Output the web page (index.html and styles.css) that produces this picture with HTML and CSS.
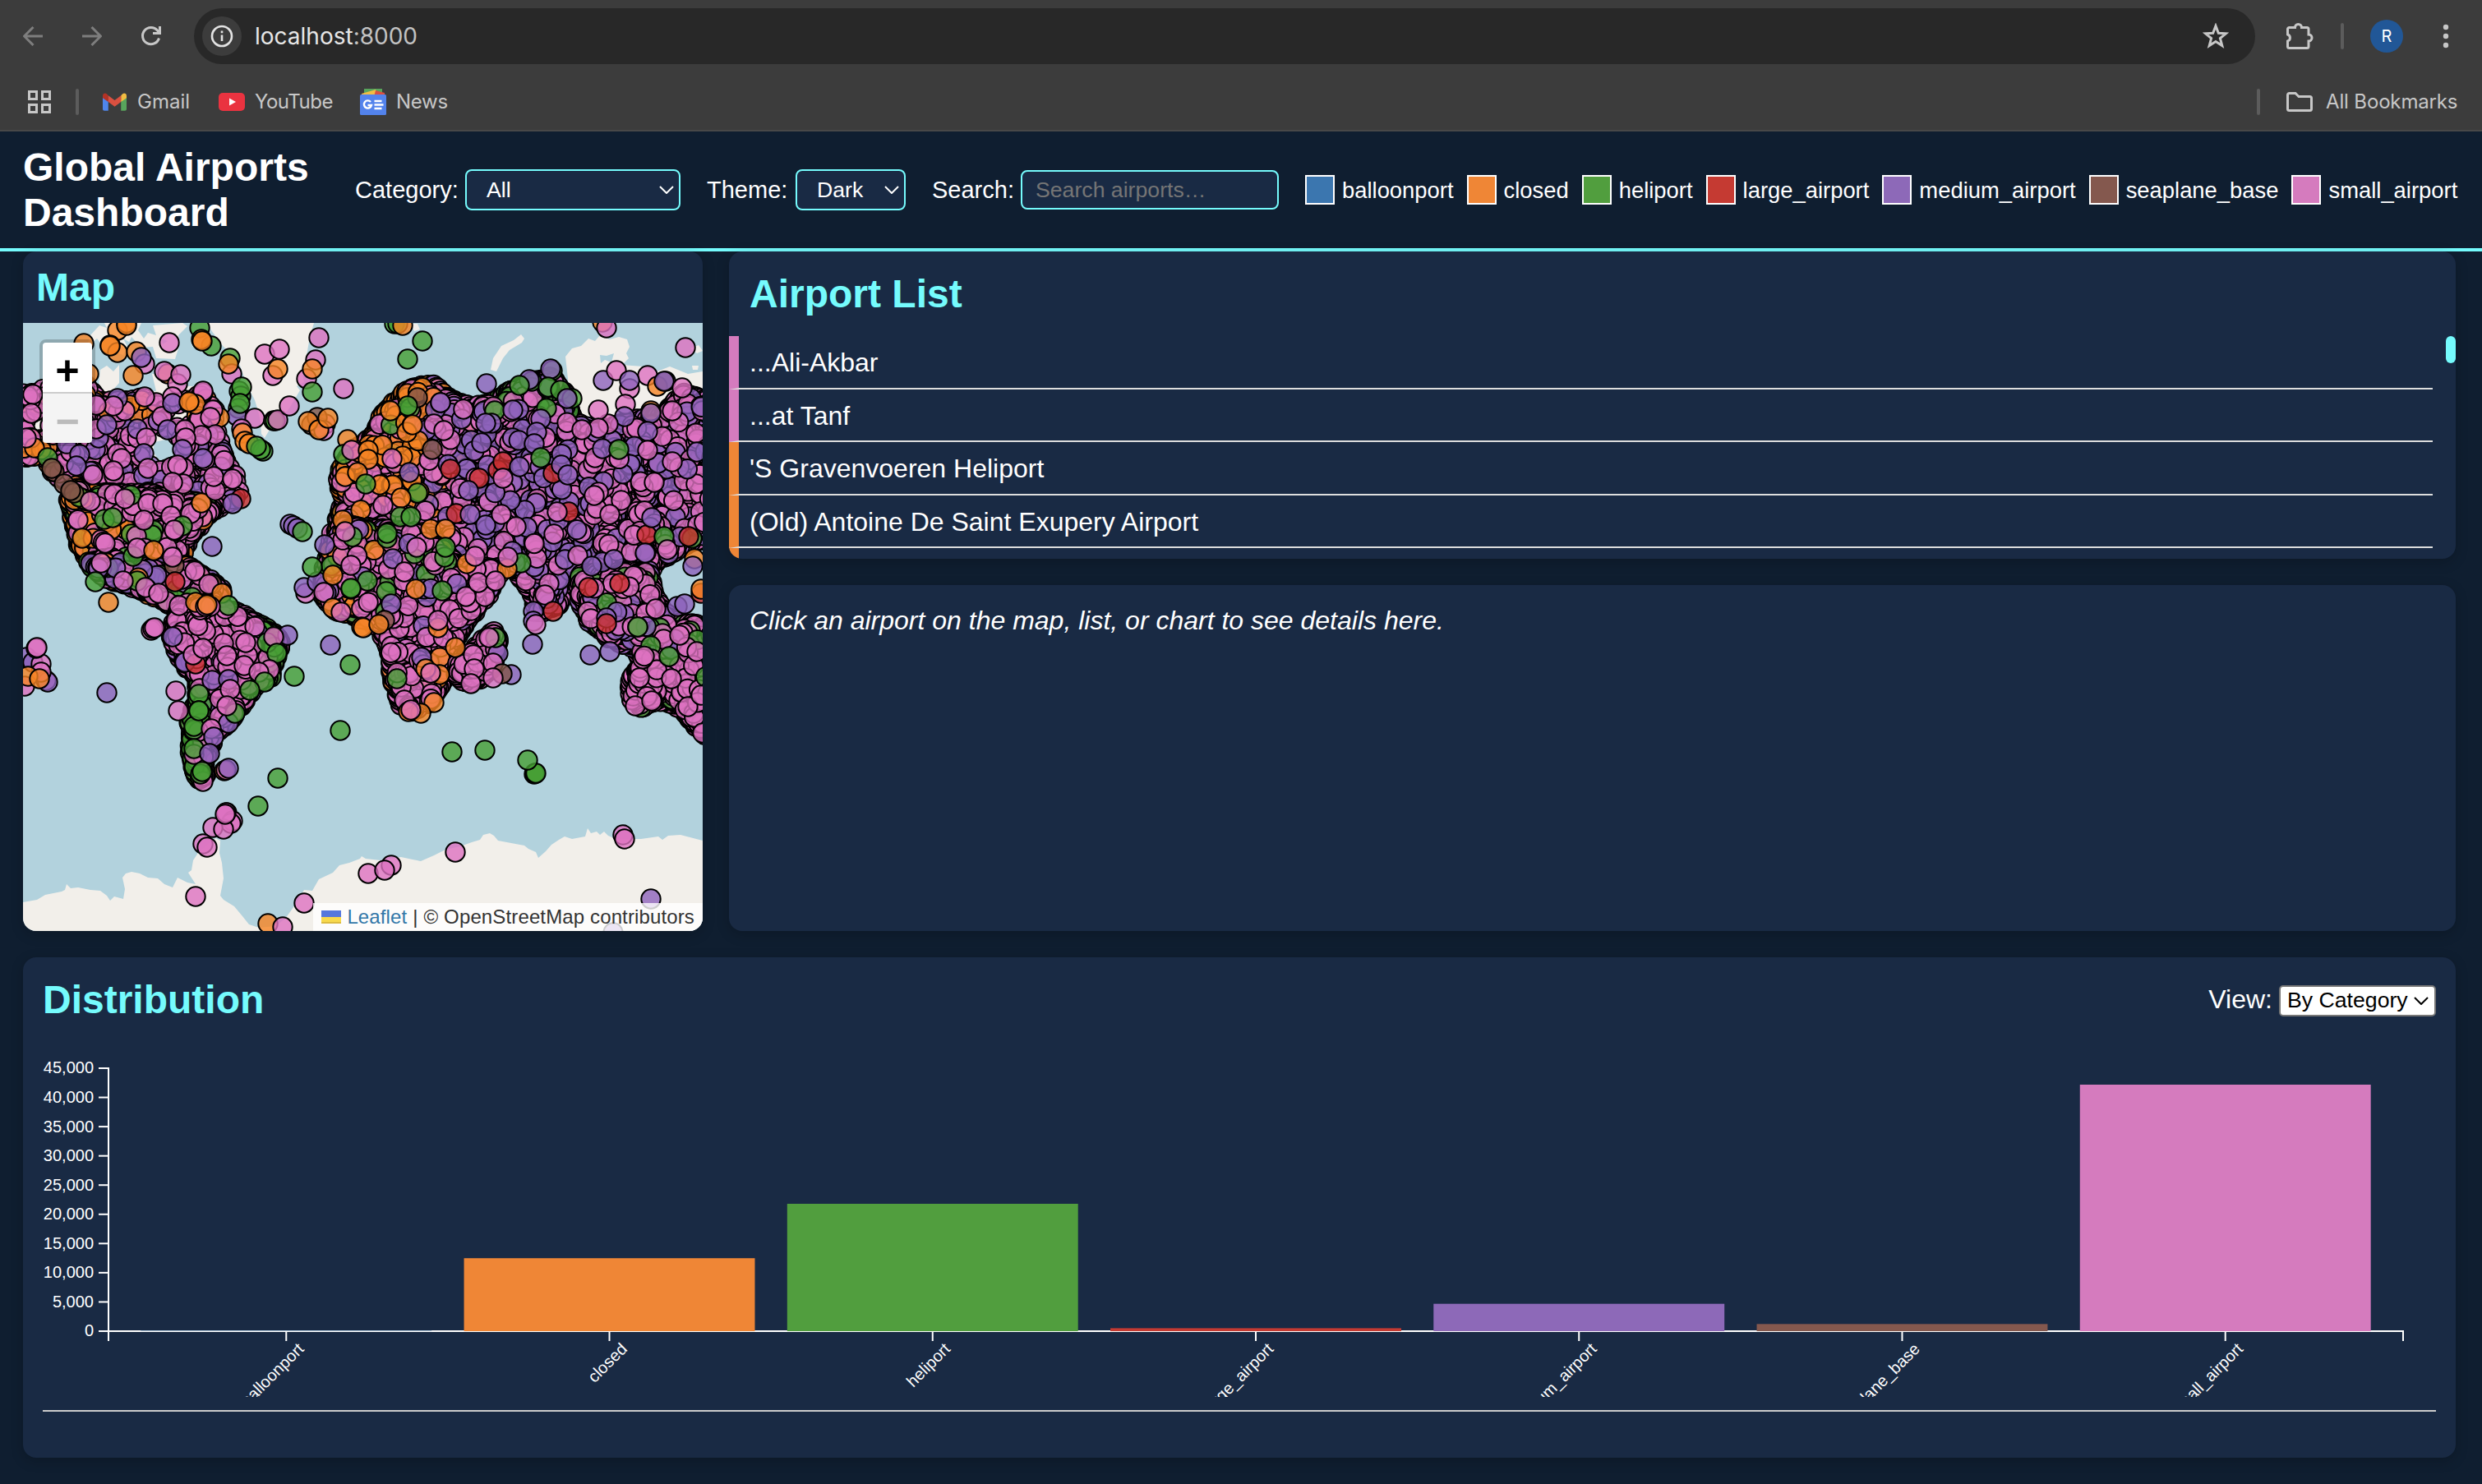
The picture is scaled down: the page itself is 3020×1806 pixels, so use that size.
FILE: index.html
```html
<!DOCTYPE html>
<html lang="en">
<head>
<meta charset="utf-8">
<title>Global Airports Dashboard</title>
<link rel="stylesheet" href="styles.css">
</head>
<body>
<div class="browser">
  <div class="toolbar">
    <svg class="nav dim" viewBox="0 0 24 24"><path d="M24 12H2M12.5 1 1.5 12l11 11"/></svg>
    <svg class="nav dim" viewBox="0 0 24 24"><path d="M0 12h22M11.500 1l11 11-11 11"/></svg>
    <svg class="nav" viewBox="0 0 24 24"><path d="M21.500 14.500A10.200 10.200 0 1 1 19.500 5l2.500 3M22.500 0v8.500H14"/></svg>
    <div class="omnibox">
      <span class="site-info"><svg viewBox="0 0 28 28"><circle cx="14" cy="14" r="12"/><path d="M14 12.500v7.500M14 7.500v2.800"/></svg></span>
      <span class="url">localhost<span class="port">:8000</span></span>
      <svg class="star" viewBox="0 0 32 32"><path d="M16 3.500l3.300 8.700 9.300.5-7.200 5.900 2.400 9L16 22.500l-7.800 5.100 2.400-9-7.200-5.900 9.300-.5z"/></svg>
    </div>
    <svg class="puzzle" viewBox="0 0 32 32"><path d="M3.500 5.500h7a4 4 0 0 1 8 0h6.500a2 2 0 0 1 2 2v6.500a4 4 0 0 1 0 8v6.500a2 2 0 0 1-2 2H3.500a2 2 0 0 1-2-2v-6.500a4.200 4.200 0 0 0 0-8V7.500a2 2 0 0 1 2-2z"/></svg>
    <span class="sep toolbar-sep"></span>
    <span class="avatar">R</span>
    <svg class="dots" viewBox="0 0 12 32"><circle cx="6" cy="5" r="3.200"/><circle cx="6" cy="16" r="3.200"/><circle cx="6" cy="27" r="3.200"/></svg>
  </div>
  <div class="bookmarks">
    <svg class="apps" viewBox="0 0 28 28"><path d="M1.500 1.500h9v9h-9zM17.500 1.500h9v9h-9zM1.500 17.500h9v9h-9zM17.500 17.500h9v9h-9z"/></svg>
    <span class="sep apps-sep"></span>
    <a class="bm bm-gmail"><svg viewBox="0 0 30 22"><path fill="#4f86ec" d="M0 4l7 5v13H2a2 2 0 0 1-2-2z"/><path fill="#58a55c" d="M30 4l-7 5v13h5a2 2 0 0 0 2-2z"/><path fill="#f2bd42" d="M23 3l2-2c2-1.800 5-.5 5 2.500V6l-7 5z"/><path fill="#b33225" d="M7 3L5 1C3-.8 0 .5 0 3.500V6l7 5z"/><path fill="#d95040" d="M7 3l8 6 8-6v8l-8 6-8-6z"/></svg>Gmail</a>
    <a class="bm bm-youtube"><svg viewBox="0 0 32 22"><rect width="32" height="22" rx="5" fill="#ea3340"/><path fill="#fff" d="M13 6.500l8 4.500-8 4.500z"/></svg>YouTube</a>
    <a class="bm bm-news"><svg viewBox="0 0 32 32"><path fill="#58a55c" d="M5 0h22v8H5z"/><path fill="#f2bd42" d="M2 6l17-5 4 8H3z"/><path fill="#d95040" d="M19 2l11 3v5H17z"/><rect y="7" width="32" height="25" rx="1.500" fill="#5383ec"/><path fill="none" stroke="#fff" stroke-width="2.400" d="M13 16a4.600 4.600 0 1 0 1 4H9.500M17.500 15h9M17.500 19.500h11M17.500 24h9"/></svg>News</a>
    <span class="sep all-sep"></span>
    <a class="bm bm-all"><svg viewBox="0 0 32 24"><path d="M3.500 1.500H11l4 4h13.500a2 2 0 0 1 2 2v13a2 2 0 0 1-2 2h-25a2 2 0 0 1-2-2v-17a2 2 0 0 1 2-2z"/></svg>All Bookmarks</a>
  </div>
</div>

<header class="header">
  <h1>Global Airports Dashboard</h1>
  <div class="field"><span>Category:</span><div class="select select-cat">All<svg class="chev" viewBox="0 0 18 10"><path d="M1 1l8 8 8-8"/></svg></div></div>
  <div class="field"><span>Theme:</span><div class="select select-theme">Dark<svg class="chev" viewBox="0 0 18 10"><path d="M1 1l8 8 8-8"/></svg></div></div>
  <div class="field"><span>Search:</span><input class="search" type="text" placeholder="Search airports…"></div>
  <div class="legend">
    <span class="key"><i class="swatch c-balloon"></i><b>balloonport</b></span>
    <span class="key"><i class="swatch c-closed"></i><b>closed</b></span>
    <span class="key"><i class="swatch c-heli"></i><b>heliport</b></span>
    <span class="key"><i class="swatch c-large"></i><b>large_airport</b></span>
    <span class="key"><i class="swatch c-medium"></i><b>medium_airport</b></span>
    <span class="key"><i class="swatch c-sea"></i><b>seaplane_base</b></span>
    <span class="key"><i class="swatch c-small"></i><b>small_airport</b></span>
  </div>
</header>

<main class="grid">
  <section class="panel map-panel">
    <h2>Map</h2>
    <div class="map">
      <svg class="map-svg" viewBox="28 393 827 740">
        <g class="land" id="land"></g>
        <g id="markers" class="markers"></g>
      </svg>
      <div class="zoom"><a class="zoom-in">+</a><a class="zoom-out">−</a></div>
      <div class="attribution"><svg viewBox="0 0 24 16"><path fill="#5577dc" d="M0 0h24v8H0z"/><path fill="#f8d94c" d="M0 8h24v6H0z"/><path fill="#dcbb41" d="M0 14h24v2H0z"/></svg><a>Leaflet</a><span>| © OpenStreetMap contributors</span></div>
    </div>
  </section>
  <section class="panel list-panel">
    <h2>Airport List</h2>
    <div class="list-wrap">
      <ul class="list">
        <li class="b-small">...Ali-Akbar</li>
        <li class="b-small">...at Tanf</li>
        <li class="b-closed">'S Gravenvoeren Heliport</li>
        <li class="b-closed">(Old) Antoine De Saint Exupery Airport</li>
        <li class="b-closed">&nbsp;</li>
      </ul>
      <span class="thumb"></span>
    </div>
  </section>
  <section class="panel detail-panel"><em>Click an airport on the map, list, or chart to see details here.</em></section>
  <section class="panel chart-panel">
    <div class="chart-head">
      <h2>Distribution</h2>
      <div class="view"><span>View:</span><div class="view-select">By Category<svg class="chev" viewBox="0 0 18 10"><path d="M1 1l8 8 8-8"/></svg></div></div>
    </div>
    <svg class="chart" id="chart" viewBox="52 1260 2912 440"></svg>
    <hr>
  </section>
</main>
<script src="script.js"></script>
</body>
</html>
```
FILE: styles.css
```css
* { box-sizing: border-box; }
html, body { height: 100%; }
body {
  margin: 0;
  overflow: hidden;
  display: flex;
  flex-direction: column;
  background: #0f1e30;
  color: #fff;
  font: 32px/36.8px "Liberation Sans", Arial, sans-serif;
}

/* browser bars */
.browser {
  height: 160px;
  background: #3c3c3c;
  box-shadow: inset 0 -2px #484848;
  font-family: Inter, "Noto Sans", sans-serif;
  color: #c7c7c7;
}
.browser svg { fill: none; stroke: #c7c7c7; stroke-width: 3; flex: none; }
.toolbar { height: 88px; padding-left: 28px; display: flex; align-items: center; }
.nav { width: 24px; height: 24px; margin-right: 48px; }
.browser .nav.dim { stroke: #7e7e7e; }
.nav:nth-child(3) { margin-right: 40px; overflow: visible; }
.omnibox {
  width: 2508px;
  height: 68px;
  border-radius: 34px;
  background: #282828;
  display: flex;
  align-items: center;
  padding: 0 32px 0 10px;
}
.site-info {
  width: 48px;
  height: 48px;
  border-radius: 50%;
  background: #3c3c3c;
  display: flex;
  align-items: center;
  justify-content: center;
}
.site-info svg { width: 28px; height: 28px; stroke: #e3e3e3; stroke-width: 2.6; }
.url { margin-left: 16px; flex: 1; font-size: 28px; color: #e6e6e6; }
.port { color: #c2c2c2; }
.star { width: 32px; height: 32px; }
.puzzle { width: 32px; height: 32px; margin-left: 38px; overflow: visible; }
.sep { width: 4px; height: 32px; border-radius: 2px; background: #5c5c5c; flex: none; }
.toolbar-sep { margin-left: 34px; }
.avatar {
  width: 40px;
  height: 40px;
  margin-left: 32px;
  border-radius: 50%;
  background: #215797;
  color: #fff;
  font-size: 20px;
  text-align: center;
  line-height: 40px;
}
.dots { width: 12px; height: 32px; margin-left: 46px; }
.browser .dots { fill: #c7c7c7; stroke: none; }
.bookmarks { height: 72px; padding: 0 30px 0 34px; display: flex; align-items: center; font-size: 24px; }
.apps { width: 28px; height: 28px; }
.apps-sep { margin-left: 30px; }
.bm { display: flex; align-items: center; white-space: nowrap; }
.browser .bm svg { stroke: none; }
.browser .bm-all svg { stroke: #c7c7c7; }
.bm-gmail { margin-left: 29px; width: 141px; }
.bm-gmail svg { width: 29px; height: 22px; margin-right: 13px; }
.bm-youtube { width: 172px; letter-spacing: -0.5px; }
.bm-youtube svg { width: 32px; height: 22px; margin-right: 12px; }
.bm-news { letter-spacing: -0.3px; }
.bm-news svg { width: 32px; height: 32px; margin-right: 12px; }
.all-sep { margin-left: auto; }
.bm-all { width: 208px; margin-left: 32px; letter-spacing: -0.15px; }
.bm-all svg { width: 32px; height: 24px; margin-right: 16px; }

/* page header */
.header {
  height: 146px;
  border-bottom: 4px solid #75fbfd;
  padding: 0 0 0 28px;
  display: flex;
  align-items: center;
  gap: 32px;
  white-space: nowrap;
  font-size: 29px;
}
h1 { margin: 0; width: 372px; font-size: 48px; line-height: 55px; white-space: normal; }
h2 { margin: 0; font-size: 48px; line-height: 55px; color: #75fbfd; }
.field { display: flex; align-items: center; justify-content: space-between; }
.field > span { padding-top: 1px; }
.field:nth-child(2) { width: 396px; }
.field:nth-child(3) { width: 242px; }
.field:nth-child(4) { width: 422px; }
.select, .search {
  height: 50px;
  border: 2px solid #75fbfd;
  border-radius: 8px;
  background: #192a44;
  font-size: 26.67px;
}
.select { display: flex; align-items: center; justify-content: space-between; padding: 0 6px 0 24px; }
.select-cat { width: 262px; }
.select-theme { width: 134px; }
.search { width: 314px; height: 48px; padding: 0 16px; font-family: inherit; color: #fff; }
.search::placeholder { color: #757575; }
.chev { width: 18px; height: 10px; fill: none; stroke: currentColor; stroke-width: 2; }
.legend { display: flex; gap: 16px; font-size: 27.4px; }
.key { display: flex; align-items: center; gap: 9px; }
.key b { font-weight: normal; padding-top: 2px; }
.swatch { width: 36px; height: 36px; border: 2px solid #fff; }
.c-balloon { background: #3b76af; }
.c-closed { background: #ef8636; }
.c-heli { background: #519e3e; }
.c-large { background: #c53a32; }
.c-medium { background: #8d69b8; }
.c-sea { background: #84584e; }
.c-small { background: #d57bbe; }

/* panels */
.grid {
  flex: 1;
  display: grid;
  grid-template-columns: 827px 2101px;
  grid-template-rows: 374px 421px 609px;
  gap: 32px;
  padding-left: 28px;
}
.panel { background: #192a44; border-radius: 16px; box-shadow: 0 4px 16px rgba(0, 0, 0, 0.2); overflow: hidden; }
.map-panel { grid-row: 1 / 3; display: flex; flex-direction: column; }
.map-panel h2 { height: 87px; padding: 16px 16px 0; }
.map { flex: 1; position: relative; background: #b2d2dd; overflow: hidden; }
.map-svg { display: block; width: 827px; height: 740px; }
.land { fill: #f2efea; }
.markers circle { stroke: #000; stroke-width: 2; fill-opacity: 0.8; }
.zoom {
  position: absolute;
  left: 20px;
  top: 20px;
  width: 68px;
  border: 4px solid rgba(0, 0, 0, 0.2);
  border-radius: 8px;
  background-clip: padding-box;
  text-align: center;
  font: bold 50px/75px "Liberation Mono", monospace;
  color: #000;
}
.zoom a { display: block; height: 60px; background: #fff; }
.zoom .zoom-in { height: 62px; border-bottom: 2px solid #ccc; border-radius: 4px 4px 0 0; }
.zoom .zoom-out { background: #f4f4f4; color: #bbb; border-radius: 0 0 4px 4px; }
.attribution {
  position: absolute;
  right: 0;
  bottom: 0;
  height: 34px;
  padding: 0 10px;
  background: rgba(255, 255, 255, 0.8);
  display: flex;
  align-items: center;
  gap: 7px;
  font-size: 24px;
  letter-spacing: 0.13px;
  color: #333;
  white-space: nowrap;
}
.attribution svg { width: 24px; height: 16px; }
.attribution a { color: #3277a8; }

.list-panel { display: flex; flex-direction: column; }
.list-panel h2 { height: 103px; padding: 24px 25px 0; }
.list-wrap { flex: 1; display: flex; justify-content: space-between; overflow: hidden; }
.list { width: 2073px; margin: 0; padding: 0; list-style: none; }
.list li {
  height: 64.5px;
  padding: 14px 13px 0;
  border-bottom: 2px solid #ddd;
  border-left: 12px solid;
}
.list .b-small { border-left-color: #d57bbe; }
.list .b-closed { border-left-color: #ef8636; }
.thumb { width: 12px; height: 33px; border-radius: 6px; background: #75fbfd; }
.detail-panel { padding: 25px 25px 24px; }

.chart-panel { grid-column: 1 / 3; padding: 24px 24px; display: flex; flex-direction: column; }
.chart-head { height: 71px; flex: none; display: flex; justify-content: space-between; }
.view { display: flex; height: 57px; align-items: center; gap: 8px; }
.view > span { padding-bottom: 2px; }
.view-select {
  width: 191px;
  height: 38px;
  border: 2px solid #767676;
  border-radius: 5px;
  background: #fff;
  color: #000;
  font-size: 26.67px;
  display: flex;
  align-items: center;
  justify-content: space-between;
  padding: 0 7px 0 8px;
  white-space: nowrap;
}
.chart { display: block; width: 2912px; height: 440px; overflow: hidden; font-size: 20px; }
.chart text { fill: #fff; text-anchor: end; }
.chart .axis { fill: none; stroke: #fff; stroke-width: 2; }
hr { width: 100%; margin: 16px 0 0; border: 0; height: 2px; flex: none; background: #ccc; }
```
FILE: script.js
```js
var NS = 'http://www.w3.org/2000/svg';
function add(parent, tag, attrs, text) {
  var e = document.createElementNS(NS, tag);
  for (var k in attrs) e.setAttribute(k, attrs[k]);
  if (text) e.textContent = text;
  parent.appendChild(e);
  return e;
}

// Coastlines, in the map's own viewBox units
var LAND = [
  '28,1098 45,1095 55,1089 75,1085 79,1083 81,1076 86,1081 95,1080 110,1083 122,1084 130,1090 134,1096 139,1091 150,1094 152,1082 149,1068 153,1063 160,1061 170,1063 180,1068 192,1069 200,1076 210,1080 216,1068 228,1074 238,1076 229,1062 233,1059 235,1047 241,1038 250,1030 262,1020 268,1023 267,1038 270,1050 272,1069 268,1090 272,1095 285,1103 295,1115 303,1125 315,1129 335,1127 347,1118 360,1100 370,1083 380,1084 388,1070 405,1062 413,1053 425,1050 438,1045 440,1042 445,1045 463,1047 488,1043 502,1046 512,1048 528,1041 542,1034 560,1030 574,1025 584,1022 588,1016 596,1014 601,1017 606,1023 622,1026 638,1029 643,1033 652,1037 655,1044 664,1036 671,1028 680,1022 687,1018 696,1021 712,1018 715,1008 719,1014 726,1012 730,1016 735,1012 740,1017 749,1021 780,1021 801,1018 806,1022 813,1017 828,1016 855,1023 855,1133 28,1133',
  '253,393 257,402 263,410 272,422 282,430 292,445 300,467 310,487 314,500 317,513 318,528 322,533 328,523 333,517 345,505 352,497 365,475 361,470 370,465 368,455 373,433 377,410 382,393',
  '105,423 110,408 121,396 130,399 127,393 172,393 168,402 175,412 180,405 190,408 186,396 222,393 228,397 217,408 219,418 213,437 190,436 186,422 172,423 160,410 150,432 128,425 118,412',
  '120,470 122,450 130,445 138,452 145,444 145,466 137,475 141,480 190,476 185,455 200,455 215,470 240,470 246,480 225,475 205,480 200,495 130,495',
  '40,480 120,470 200,500 250,490 270,560 285,600 230,660 150,700 100,650 60,560 28,560 28,480',
  '180,505 235,502 243,518 215,538 190,520',
  '597,450 600,436 610,421 625,414 634,407 638,412 635,417 620,426 612,436 604,452',
  '688,434 696,424 707,421 716,412 724,415 730,408 742,413 753,410 763,413 766,422 762,430 765,436 757,444 783,446 800,452 815,446 837,455 855,452 855,540 690,520 692,470',
  '500,394 508,394 511,401 504,403',
  '840,424 850,420 855,427 848,430', '842,445 850,445 849,450 843,450',
  '460,560 560,490 690,490 860,520 860,640 700,680 560,660 450,620'
];
var SEA = ['730,432 738,433 747,430 744,441 736,438 731,442', '188,538 210,533 214,560 200,568 186,550',
  '150,412 160,418 155,422', '196,412 204,415 198,419'];
var land = document.getElementById('land');
LAND.forEach(function (p) { add(land, 'polygon', { points: p }); });
SEA.forEach(function (p) { add(land, 'polygon', { points: p, fill: '#b2d2dd' }); });

var COL = { o: '#f68524', p: '#dd72c0', v: '#8d63bc', g: '#469f35', r: '#cb3030', b: '#835649' };
var markers = document.getElementById('markers');
function dot(x, y, c) { add(markers, 'circle', { cx: x.toFixed(1), cy: y.toFixed(1), r: 11.7, fill: COL[c] }); }
var seed = 7;
function rnd() { seed = (seed * 1103515245 + 12345) & 0x7fffffff; return (seed >> 8) / 0x7fffff; }
function inside(x, y, P) {
  var r = false;
  for (var i = 0, j = P.length - 2; i < P.length; j = i, i += 2)
    if ((P[i + 1] > y) !== (P[j + 1] > y) && x < (P[j] - P[i]) * (y - P[i + 1]) / (P[j + 1] - P[i + 1]) + P[i]) r = !r;
  return r;
}
// Dense regions: outline of marker centres, area per marker, colour mix (a string to draw from)
var REGIONS = [
  [[28,480,50,475,105,470,125,490,175,485,200,500,245,480,260,500,262,530,275,560,285,580,290,597,285,608,262,620,95,595,70,580,50,555,28,555], 75, function (x, y) { return y < 510 && x > 60 ? 'ppppvvoo' : x < 60 ? 'pppppooo' : 'pppppppvvv'; }],
  [[92,592,110,600,180,602,262,615,242,640,228,655,222,672,200,682,196,672,170,680,150,692,128,700,108,680,95,660,90,630,85,610], 22, function (x) { return x < 115 ? 'ooopg' : 'pppppppppog'; }],
  [[108,685,135,680,160,690,190,690,200,700,225,688,245,700,262,712,270,722,262,735,240,745,215,740,195,728,160,713,130,704], 28, function () { return 'ppppvvgo'; }],
  [[212,760,216,745,250,735,270,740,290,745,305,755,335,772,342,785,335,800,328,825,310,832,300,850,285,868,275,880,262,892,253,912,248,925,250,945,243,948,238,940,233,920,232,880,240,855,242,825,228,812,218,795,210,775], 26, function (x, y) { return x < 246 && y > 830 ? 'gggggp' : x > 318 ? 'gggp' : 'ppppppppv'; }],
  [[418,565,432,548,455,530,465,505,480,490,500,472,528,470,545,485,575,497,600,490,625,475,650,464,672,460,688,480,695,510,720,525,745,520,775,512,810,505,832,480,855,485,866,495,866,660,845,655,830,665,800,682,785,700,700,702,685,720,680,735,655,745,648,720,625,690,560,690,520,660,420,650,412,630,420,610,412,585], 42, function (x, y) {
    if (y < 500 && x > 600 && x < 700) return 'ggpppvv';
    if (x < 515 && y < 630) return 'oooooppppg';
    if (x < 570 && y > 600) return 'ppppoogvvv';
    return x < 580 ? 'ppppvvvo' : x < 720 ? 'ppppppvvvvvv' : 'ppppppppvvvv'; }],
  [[396,690,405,650,420,640,520,650,560,690,608,692,595,720,575,745,555,775,548,800,538,830,522,855,500,866,487,855,478,825,475,795,463,762,430,748,408,742,393,722], 30, function (x, y) { return y > 790 ? 'pppppppo' : y < 750 && x < 545 ? 'pppppppggov' : 'pppppppv'; }],
  [[558,805,578,790,600,770,606,778,602,795,598,815,580,828,566,830,556,820], 30, function () { return 'ppppp'; }],
  [[706,700,788,695,796,728,815,755,866,765,866,898,850,885,830,862,800,850,782,861,769,850,768,825,782,808,775,790,742,775,718,755,706,730], 32, function (x, y) { return y > 800 ? 'pppppppppppg' : 'ppppppvvg'; }]
];
REGIONS.forEach(function (R) {
  var P = R[0], i, x0 = 1e9, x1 = 0, y0 = 1e9, y1 = 0;
  function put(x, y) {
    if (Math.pow((x - 199) / 25, 2) + Math.pow((y - 548) / 22, 2) < 1) return;
    if (Math.pow((x - 218) / 20, 2) + Math.pow((y - 507) / 12, 2) < 1) return;
    var m = R[2](x, y); dot(x, y, m[Math.floor(rnd() * m.length) % m.length]);
  }
  var dark = R[1] < 60, step = dark ? 3 : 9;
  for (i = 0; i < P.length; i += 2) {
    var k = (i + 2) % P.length, L = Math.hypot(P[k] - P[i], P[k + 1] - P[i + 1]);
    for (var t = 0; t < L; t += step) put(P[i] + (P[k] - P[i]) * t / L + rnd() * 4 - 2, P[i + 1] + (P[k + 1] - P[i + 1]) * t / L + rnd() * 4 - 2);
    x0 = Math.min(x0, P[i]); x1 = Math.max(x1, P[i]); y0 = Math.min(y0, P[i + 1]); y1 = Math.max(y1, P[i + 1]);
  }
  var n = (x1 - x0) * (y1 - y0) / R[1];
  for (i = 0; i < n; i++) {
    var x = x0 + rnd() * (x1 - x0), y = y0 + rnd() * (y1 - y0);
    if (inside(x, y, P)) put(x, y);
  }
});
// Individually visible airports, drawn last
var TOP = '102,418o 108,455o 143,402o 154,393o 154,396o 134,420o 143,429o 134,421o 166,428o 176,443p 172,435v 162,457o 206,417p 204,455o 200,452p 216,467p 220,456p 247,478p 247,476p 243,399g 257,421g 245,413o 246,415o 280,436g 282,455p 278,443o 291,476g 293,482g 294,471g 290,497g 288,506v 292,491g 310,509p 294,522p 295,527o 298,537o 303,540o 320,549g 317,547g 312,543g 333,512g 335,512g 338,511p 352,494p 322,431p 340,425p 332,457p 338,449o 388,411p 384,438p 373,461p 380,449o 380,477g 418,473p 379,517b 396,516p 388,520p 386,508b 394,524p 375,513o 388,523o 399,509o 423,535o 418,553g 428,548p ' +
'158,493o 152,500p 143,485v 138,494p 190,490p 176,483p 197,507p 210,483p 210,491v 238,492o 230,489o 267,508o 259,499p 256,508p 262,529p 245,530p 204,523v 225,523p 226,533p 167,522v 178,533p 222,547v 175,552v 247,558v 216,566p 180,570p 143,552p 148,558p 120,533v 117,522p 130,517v 117,493p 97,553v 113,578p 93,567v 138,573p 40,480p 38,503p 42,545o 32,533p 58,557g 66,574b 63,570b 78,589b 90,600b 86,597b 110,610p 152,607p 127,632g 137,630g 180,613p 198,613p 175,633p 208,628p 232,625p 222,640g 212,645p 245,612o 293,607r 283,613v 262,597p 260,580p 223,589p 210,587p 283,583p 100,655o 128,661p 162,677g 167,667p 187,670o 212,688b 210,678p 258,665v 116,708g 123,685p 167,707g 150,707p 177,715p 193,722p 237,695p 213,708r 258,711b 254,711p 132,733o 353,638v 357,640v 362,643v 368,647g 395,663v 372,722p 370,715v 386,708v 380,690g 417,633o 420,647p 420,580o 405,700o 427,688p 394,721p 427,717g 405,740o 415,745p 440,763o 442,764o ' +
'184,767p 186,765p 188,764p 210,775v 270,722o 218,737p 238,733o 278,737g 256,738p 250,738p 252,736o 350,773v 325,782g 333,775p 337,795g 299,782p 225,806v 238,808r 235,797p 247,789p 272,783p 277,812p 276,798p 297,810p 328,815p 315,818p 358,823g 322,830g 304,840g 258,828v 278,827v 280,839p 242,845g 242,865g 236,888g 236,884g 236,918p 236,911g 247,951p 244,942g 246,939g 267,872p 278,880v 286,868g 276,859p 257,887p 260,897v 255,917v 273,938o 275,937p 278,935v 217,865p 214,841p 242,865g 130,843v 426,809g 402,785v 414,889g 338,947g 314,981g 276,989p 283,999p 281,1002p 259,1007p 272,1009p 275,989p 274,991p 247,1027p 252,1031p 238,1091p 370,1099p 326,1124o 344,1128p 550,915g 590,913g 650,942g 651,941g 652,941g 642,925g 476,1053p 448,1063p 468,1059p 554,1037p 758,1016p 760,1021p 792,1094v 746,1135v ' +
'32,800v 40,806v 50,808p 30,835p 56,828p 58,830v 50,818p 44,789p 45,788p 34,823o 48,826o ' +
'514,415g 496,437g 480,394g 484,394g 490,396o 733,392o 738,399p 834,423p 592,467v 672,451g 670,449v 647,464g 644,462v 632,469g 667,471g 682,475g 734,463v 750,451p 788,457p 766,473p 766,463v 800,470o 810,464b 808,464v 830,472p 761,492p 760,507v 792,500o 792,503v 740,516p 728,499p 728,521p 708,523p 696,485g 690,485v 602,500g 624,499v 818,500p 536,490p 536,490v 508,484b 496,494g 475,500o 495,526o 502,517o 528,516p 540,524p 598,515v 591,515v 658,510v 653,526v 650,540v 586,539v 526,547b 490,555o 477,558p 448,548o 448,559o 462,590o 435,575o 445,589g 498,575v 508,600g 488,606o 466,615p 487,629g 500,629g 471,655g 471,649g 548,571r 606,572r 583,582r 570,597v 612,562r 612,582p 632,568v 658,557g 673,576r 683,566v 691,578v 724,557p 733,546v 753,547g 788,525v 788,548p 818,562p 848,550v 555,625r 572,626v 591,639v 610,626p 628,641p 524,644o 542,644o 692,623r 678,623p 674,650p 756,609p 723,603p 742,626p 796,587p 787,651r 793,630v 842,655g 838,653r 808,653g 785,673v 812,669p 845,680o 843,689v 703,676p 733,684v 720,689v 747,681v 716,715r 754,710r 738,752v 738,759r 776,763p 776,763g 507,666p 541,678g 542,666g 478,680v 568,686o 578,677p 634,685g 617,692o 618,678p 506,717o 492,696p 470,720g 476,735v 447,707g 427,716g 538,719g 590,726p 567,726p 582,709p 603,707p 668,710p 663,724p 673,744r 649,744v 649,756v 652,760p 648,784v 718,797v 742,793v 533,764o 533,755p 468,755b 461,760o 554,788o 606,795v 603,776g 595,776p 576,797p 600,807p 577,814p 622,821v 611,820b 600,825p 573,832p 513,800v 535,821o 518,814o 524,819p 483,826g 492,852p 528,855o 512,868o 497,866o 500,864p 814,799g 848,793p 827,773p 798,741p 778,825p 817,826p 773,859p 793,853p 837,860p 853,846p 855,892p 824,738v 833,735v 853,722r 853,717o';
TOP.split(' ').forEach(function (s) {
  var m = /^(\d+),(\d+)(\w)$/.exec(s);
  if (m) dot(+m[1], +m[2], m[3]);
});

// Distribution chart
var chart = document.getElementById('chart');
for (var v = 0; v <= 9; v++) {
  var y = 1620 - v * 320 / 9;
  add(chart, 'path', { 'class': 'axis', d: 'M120 ' + y + 'H132' });
  add(chart, 'text', { x: 114, y: y + 6.400 }, (v * 5000).toLocaleString('en-US'));
}
add(chart, 'path', { 'class': 'axis', d: 'M132 1299V1632M132 1620H2924V1632' });
[['balloonport', 0.4, '#3b76af'], ['closed', 88.8, '#ef8636'], ['heliport', 155, '#519e3e'], ['large_airport', 3.600, '#c53a32'],
 ['medium_airport', 33.300, '#8d69b8'], ['seaplane_base', 8.700, '#84584e'], ['small_airport', 300, '#d57bbe']].forEach(function (b, i) {
  var step = 2792 / 7.1, x = 132 + step * (i + 0.1), mid = x + step * 0.45;
  add(chart, 'rect', { x: x, y: 1620 - b[1], width: step * 0.9, height: b[1], fill: b[2] });
  add(chart, 'path', { 'class': 'axis', d: 'M' + mid + ' 1621V1632' });
  add(chart, 'text', { transform: 'translate(' + mid + ' 1620) rotate(-45)', x: 0, y: 32.200 }, b[0]);
});
```
